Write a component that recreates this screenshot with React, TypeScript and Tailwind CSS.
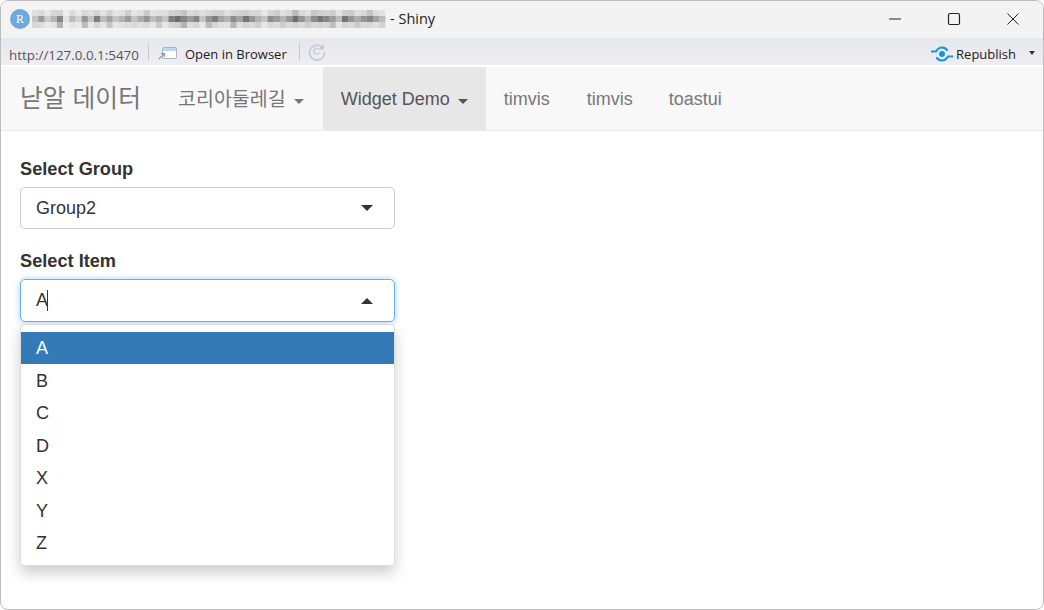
const fontStack = 'font-["Liberation_Sans","Noto_Sans_CJK_KR",sans-serif]'

// pixelated (redacted) project path in the title bar
const blurCells = [
  0.3, 0.55, 0.25, 0.4, 0.7, 0.1, 0.35, 0.2, 0.6, 0.3, 0.75, 0.35, 0.5, 0.3, 0.4, 0.55, 0.3, 0.45, 0.6, 0.35, 0.45, 0.3,
  0.75, 0.85, 0.7, 0.55, 0.7, 0.3, 0.6, 0.75, 0.5, 0.4, 0.65, 0.5, 0.8, 0.6, 0.4, 0.3, 0.65, 0.55, 0.4, 0.6, 0.85, 0.6,
  0.4, 0.65, 0.8, 0.7, 0.55, 0.35, 0.8, 0.6, 0.45, 0.6, 0.7, 0.5, 0.35,
]

function BlurredTitle() {
  return (
    <svg width="354" height="20" className="mr-[4px]">
      {blurCells.map((v, i) => (
        <g key={i}>
          <rect x={i * 6.2} y={1} width={6.2} height={6} fill="#777" opacity={v * 0.55 * ((i * 7) % 3 === 0 ? 1 : 0.65)} />
          <rect x={i * 6.2} y={7} width={6.2} height={6} fill="#5e5e5e" opacity={Math.min(1, v * 1.05)} />
          <rect x={i * 6.2} y={13} width={6.2} height={6} fill="#808080" opacity={v * ((i * 5) % 4 === 0 ? 0.8 : 0.35)} />
        </g>
      ))}
    </svg>
  )
}

function NavItem({
  label,
  active,
  caret,
  korean,
  tight,
}: {
  label: string
  active?: boolean
  caret?: boolean
  korean?: boolean
  tight?: boolean
}) {
  return (
    <div
      className={`flex h-full items-center pl-[18px] pt-[2px] ${tight ? 'pr-[18px]' : 'pr-[19px]'} ${korean ? 'text-[19.5px]' : 'text-[18px]'} ${active ? 'bg-[#e7e7e7] text-[#555555]' : 'text-[#777777]'}`}
    >
      {label}
      {caret && (
        <span className="ml-[8px] mt-[3px] h-0 w-0 border-x-[5px] border-t-[5px] border-x-transparent border-t-current" />
      )}
    </div>
  )
}

const options = ['B', 'C', 'D', 'X', 'Y', 'Z']

export default function App() {
  return (
    <div className={`h-[610px] w-[1044px] overflow-hidden bg-white ${fontStack}`}>
      <div className="flex h-[610px] flex-col overflow-hidden rounded-[8px] border border-[#bdbdbd] bg-white">
        {/* title bar */}
        <div className="flex h-[37px] shrink-0 items-center bg-[#f3f3f3] pb-[2px] pl-[9px]">
          <div className="flex h-[20px] w-[20px] items-center justify-center rounded-full bg-[#6fa8dc] font-['Liberation_Serif',serif] text-[12px] text-white">
            R
          </div>
          <div className="ml-[2px] flex items-center">
            <BlurredTitle />
            <span className="font-['Open_Sans',sans-serif] text-[14.5px] text-[#222222]">- Shiny</span>
          </div>
          <div className="ml-auto flex items-center">
            <svg width="14" height="14" viewBox="0 0 14 14" className="mr-[45px]">
              <path d="M1 7h12" stroke="#222" strokeWidth="1" />
            </svg>
            <svg width="14" height="14" viewBox="0 0 14 14" className="mr-[45px]">
              <rect x="1.500" y="1.500" width="11" height="11" rx="1.500" fill="none" stroke="#222" strokeWidth="1.200" />
            </svg>
            <svg width="14" height="14" viewBox="0 0 14 14" className="mr-[23px]">
              <path d="M1.500 1.500l11 11M12.500 1.500l-11 11" stroke="#222" strokeWidth="1" />
            </svg>
          </div>
        </div>

        {/* rstudio viewer toolbar */}
        <div className="flex h-[27px] shrink-0 items-center bg-[linear-gradient(#e6e7ec,#eeeef2)] pl-[8px] pt-[7px] font-['Open_Sans',sans-serif] text-[13px]">
          <span className="text-[13.4px] text-[#555555]">http://127.0.0.1:5470</span>
          <div className="ml-[9px] mt-[-6px] h-[18px] w-px bg-[#c9cad0]" />
          <svg width="20" height="14" viewBox="0 0 20 14" className="ml-[9px] mt-[-4px]">
            <rect x="4.500" y="1.500" width="14" height="11" rx="1.500" fill="#fff" stroke="#aab4c0" />
            <rect x="5" y="2" width="13" height="3" fill="#bcd8f2" />
            <path d="M1 13l5-5M3 7.500h3.500V11" fill="none" stroke="#8a96a3" strokeWidth="1.200" />
          </svg>
          <span className="ml-[7px] text-[#1c1c1c]">Open in Browser</span>
          <div className="ml-[12px] mt-[-6px] h-[18px] w-px bg-[#c9cad0]" />
          <svg width="18" height="20" viewBox="0 0 18 20" className="ml-[8px] mt-[-7px]">
            <path d="M14 5A7.500 7.500 0 1 0 16.500 10.500" fill="none" stroke="#c3ccd6" strokeWidth="1.600" />
            <path d="M11.500 10.500a3 3 0 1 1-.8-3.500" fill="none" stroke="#c3ccd6" strokeWidth="1.400" />
            <path d="M16 2v5.500h-5.500z" fill="#c3ccd6" />
          </svg>
          <div className="ml-auto flex items-center">
            <svg width="22" height="16" viewBox="0 0 22 16" className="mt-[-3px]">
              <circle cx="11" cy="8" r="3" fill="#1a94e0" />
              <path d="M0 5.500h5C6.500 3 8.500 1.500 11 1.500c2.500 0 4.500 1.200 5.500 3.200" fill="none" stroke="#1a94e0" strokeWidth="2.200" />
              <path d="M22 10.500h-5C15.500 13 13.500 14.500 11 14.500c-2.500 0-4.500-1.200-5.500-3.200" fill="none" stroke="#1a94e0" strokeWidth="2.200" />
            </svg>
            <span className="ml-[3px] text-[#1c1c1c]">Republish</span>
            <span className="ml-[13px] mr-[8px] mt-[-4px] h-0 w-0 border-x-[3.500px] border-t-[4px] border-x-transparent border-t-[#333333]" />
          </div>
        </div>

        {/* shiny app */}
        <div className="mt-[2px] flex h-[64px] shrink-0 items-stretch border-b border-[#e7e7e7] bg-[#f8f8f8]">
          <div className="flex w-[159px] shrink-0 items-center pl-[19px] text-[24.8px] text-[#777777]">낟알 데이터</div>
          <NavItem label="코리아둘레길" caret korean />
          <NavItem label="Widget Demo" active caret tight />
          <NavItem label="timvis" />
          <NavItem label="timvis" tight />
          <NavItem label="toastui" />
        </div>

        <div className="relative flex-1 pl-[19px] pt-[28px] text-[18px] text-[#333333]">
          <div className="w-[375px]">
            <label className="block h-[20px] text-[18.2px] font-bold leading-[20px]">Select Group</label>
            <div className="mt-[8px] flex h-[42px] items-center justify-between rounded-[5px] border border-[#cccccc] pl-[15px] pr-[21px]">
              <span>Group2</span>
              <span className="h-0 w-0 border-x-[6px] border-t-[6px] border-x-transparent border-t-[#333333]" />
            </div>
            <label className="mt-[22px] block h-[20px] text-[18.2px] font-bold leading-[20px]">Select Item</label>
            <div className="mt-[8px] flex h-[43px] items-center justify-between rounded-[5px] border border-[#66afe9] pl-[15px] pr-[21px] shadow-[0_0_6px_rgba(102,175,233,0.6)]">
              <span className="flex items-center">
                A<span className="ml-[-1px] h-[21px] w-px bg-[#333333]" />
              </span>
              <span className="h-0 w-0 border-x-[6px] border-b-[6px] border-x-transparent border-b-[#333333]" />
            </div>
          </div>

          {/* open selectize dropdown */}
          <div className="absolute left-[19px] top-[193px] w-[375px] rounded-[4px] border border-[#dddddd] bg-white pb-[5px] pt-[7px] shadow-[0_7px_14px_rgba(0,0,0,0.2)]">
            <div className="flex h-[32px] items-center bg-[#337ab7] pl-[15px] text-white">A</div>
            <div className="mt-[0.75px]">
              {options.map((o) => (
                <div key={o} className="flex h-[32.500px] items-center pl-[15px] text-[#333333]">
                  {o}
                </div>
              ))}
            </div>
          </div>
        </div>
      </div>
    </div>
  )
}
